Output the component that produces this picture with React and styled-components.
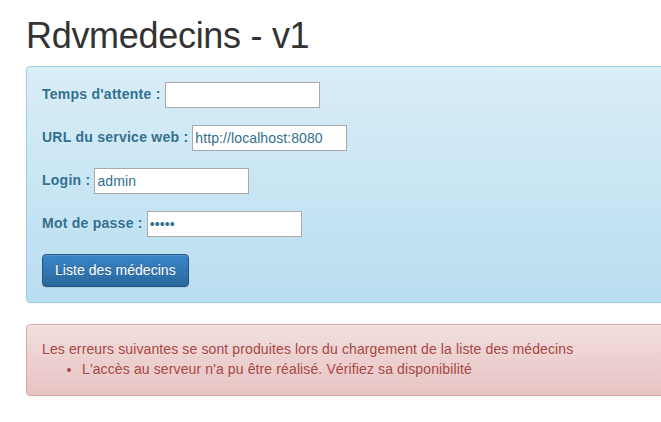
import React from "react";
import styled, { createGlobalStyle } from "styled-components";

const Global = createGlobalStyle`
  html, body { margin: 0; padding: 0; overflow: hidden; background: #fff; }
  body {
    font-family: "Liberation Sans", Arial, Helvetica, sans-serif;
    font-size: 14px;
    line-height: 1.42857;
    color: #333;
  }
  * { box-sizing: border-box; }
`;

const Page = styled.div`
  width: 1160px;
  padding: 16px 0 0 26px;
`;

const Title = styled.h1`
  margin: 0 0 10px 0;
  font-size: 36px;
  font-weight: 500;
  line-height: 1.1;
  letter-spacing: -0.3px;
  color: #333;
`;

const Alert = styled.div`
  padding: 15px;
  margin-bottom: ${(p) => (p.$kind === "danger" ? "20px" : "21px")};
  border: 1px solid ${(p) => (p.$kind === "danger" ? "#dca7a7" : "#9acfea")};
  border-radius: 4px;
  color: ${(p) => (p.$kind === "danger" ? "#a94442" : "#31708f")};
  letter-spacing: 0.12px;
  background-image: ${(p) =>
    p.$kind === "danger"
      ? "linear-gradient(to bottom, #f2dede 0%, #e7c3c3 100%)"
      : "linear-gradient(to bottom, #d9edf7 0%, #b9def0 100%)"};
  box-shadow: inset 0 1px 0 rgba(255, 255, 255, 0.25), 0 1px 2px rgba(0, 0, 0, 0.05);
  text-shadow: 0 1px 0 rgba(255, 255, 255, 0.2);
`;

const Form = styled.form`
  display: flex;
  flex-direction: column;
  align-items: flex-start;
  gap: 17px;
`;

const Row = styled.div`
  display: flex;
  align-items: center;
  gap: 4px;
`;

const Label = styled.label`
  font-weight: bold;
  letter-spacing: 0.25px;
  color: #31708f;
`;

const Input = styled.input`
  width: 155px;
  height: 26px;
  margin: 0;
  padding: 0 2px;
  border: 1px solid #a9a9a9;
  border-radius: 0;
  background: #fff;
  font-family: "Liberation Sans", Arial, sans-serif;
  font-size: 14px;
  letter-spacing: 0.1px;
  color: #31708f;
  outline: none;
`;

const Button = styled.button`
  height: 33px;
  padding: 6px 12px;
  font-family: "Liberation Sans", Arial, sans-serif;
  font-size: 14px;
  line-height: 1.42857;
  letter-spacing: 0.05px;
  color: #fff;
  background-image: linear-gradient(to bottom, #3a86c8 0%, #2a679d 100%);
  border: 1px solid #245580;
  border-radius: 4px;
  text-shadow: 0 -1px 0 rgba(0, 0, 0, 0.2);
  box-shadow: inset 0 1px 0 rgba(255, 255, 255, 0.15), 0 1px 1px rgba(0, 0, 0, 0.075);
  cursor: pointer;
`;

const ErrorList = styled.ul`
  margin: 0;
  padding-left: 40px;
`;

const fields = [
  { label: "Temps d'attente :", type: "text", value: "" },
  { label: "URL du service web :", type: "text", value: "http://localhost:8080" },
  { label: "Login :", type: "text", value: "admin" },
  { label: "Mot de passe :", type: "password", value: "admin" },
];

export default function App() {
  return (
    <>
      <Global />
      <Page>
        <Title>Rdvmedecins - v1</Title>
        <Alert $kind="info">
          <Form onSubmit={(e) => e.preventDefault()}>
            {fields.map((f) => (
              <Row key={f.label}>
                <Label>{f.label}</Label>
                <Input type={f.type} defaultValue={f.value} />
              </Row>
            ))}
            <Button type="submit">Liste des médecins</Button>
          </Form>
        </Alert>
        <Alert $kind="danger">
          <div>Les erreurs suivantes se sont produites lors du chargement de la liste des médecins</div>
          <ErrorList>
            <li>L'accès au serveur n'a pu être réalisé. Vérifiez sa disponibilité</li>
          </ErrorList>
        </Alert>
      </Page>
    </>
  );
}
